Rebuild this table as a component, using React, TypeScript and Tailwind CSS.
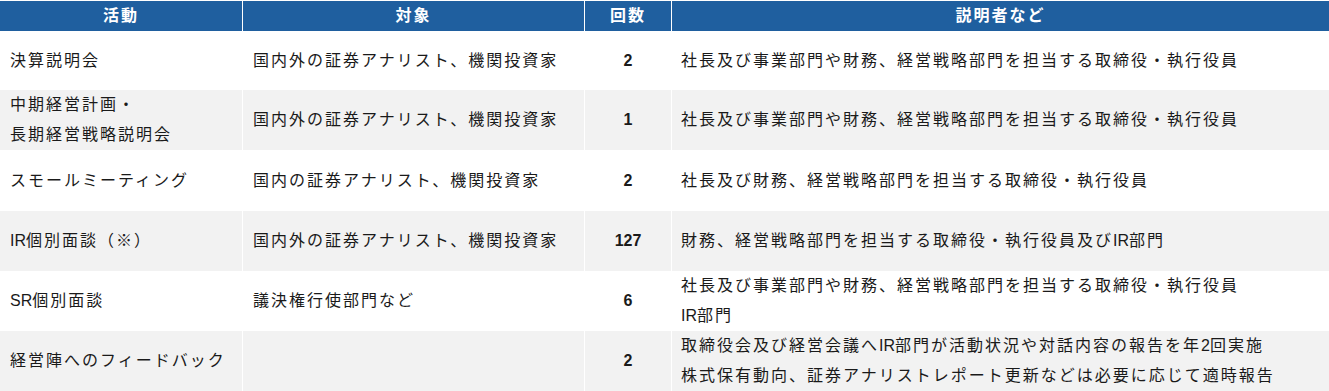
const rows: { act: string[]; target: string; count: string; who: string[]; h: string }[] = [
  { act: ['決算説明会'], target: '国内外の証券アナリスト、機関投資家', count: '2', who: ['社長及び事業部門や財務、経営戦略部門を担当する取締役・執行役員'], h: 'h-[57px]' },
  { act: ['中期経営計画・', '長期経営戦略説明会'], target: '国内外の証券アナリスト、機関投資家', count: '1', who: ['社長及び事業部門や財務、経営戦略部門を担当する取締役・執行役員'], h: 'h-[60px]' },
  { act: ['スモールミーティング'], target: '国内の証券アナリスト、機関投資家', count: '2', who: ['社長及び財務、経営戦略部門を担当する取締役・執行役員'], h: 'h-[59px]' },
  { act: ['IR個別面談（※）'], target: '国内外の証券アナリスト、機関投資家', count: '127', who: ['財務、経営戦略部門を担当する取締役・執行役員及びIR部門'], h: 'h-[60px]' },
  { act: ['SR個別面談'], target: '議決権行使部門など', count: '6', who: ['社長及び事業部門や財務、経営戦略部門を担当する取締役・執行役員', 'IR部門'], h: 'h-[58px]' },
  { act: ['経営陣へのフィードバック'], target: '', count: '2', who: ['取締役会及び経営会議へIR部門が活動状況や対話内容の報告を年2回実施', '株式保有動向、証券アナリストレポート更新などは必要に応じて適時報告'], h: 'h-[60px]' },
];

// latin letters and digits are not spaced out like the kana/kanji
function Txt({ s }: { s: string }) {
  return (
    <span>
      {s.split(/([A-Za-z0-9]+)/).map((p, i) =>
        /^[A-Za-z0-9]+$/.test(p) ? (
          <span key={i} className="tracking-normal">{p}</span>
        ) : (
          p
        )
      )}
    </span>
  );
}

export default function App() {
  return (
    <div className="w-[1329px] h-[391px] bg-white pt-px font-['Liberation_Sans','Noto_Sans_CJK_JP',sans-serif] text-[16px] text-[#1a1a1a] tracking-[2px]">
      <div className="grid grid-cols-[242px_341px_86px_1fr] gap-px bg-white">
        {['活動', '対象', '回数', '説明者など'].map((h) => (
          <div key={h} className="h-[30px] bg-[#1f5f9f] text-white font-bold flex items-center justify-center">
            {h}
          </div>
        ))}
        {rows.map((r, i) => {
          const bg = i % 2 === 1 ? 'bg-[#f2f2f2]' : 'bg-white';
          return [
            <div key={`a${i}`} className={`${bg} ${r.h} flex flex-col justify-center pl-[10px] leading-[30px]`}>
              {r.act.map((t) => (
                <Txt key={t} s={t} />
              ))}
            </div>,
            <div key={`t${i}`} className={`${bg} ${r.h} flex items-center pl-[10px]`}>
              {r.target}
            </div>,
            <div key={`c${i}`} className={`${bg} ${r.h} flex items-center justify-center font-bold tracking-normal`}>
              {r.count}
            </div>,
            <div key={`w${i}`} className={`${bg} ${r.h} flex flex-col justify-center pl-[9px] leading-[30px]`}>
              {r.who.map((t) => (
                <Txt key={t} s={t} />
              ))}
            </div>,
          ];
        })}
      </div>
    </div>
  );
}
